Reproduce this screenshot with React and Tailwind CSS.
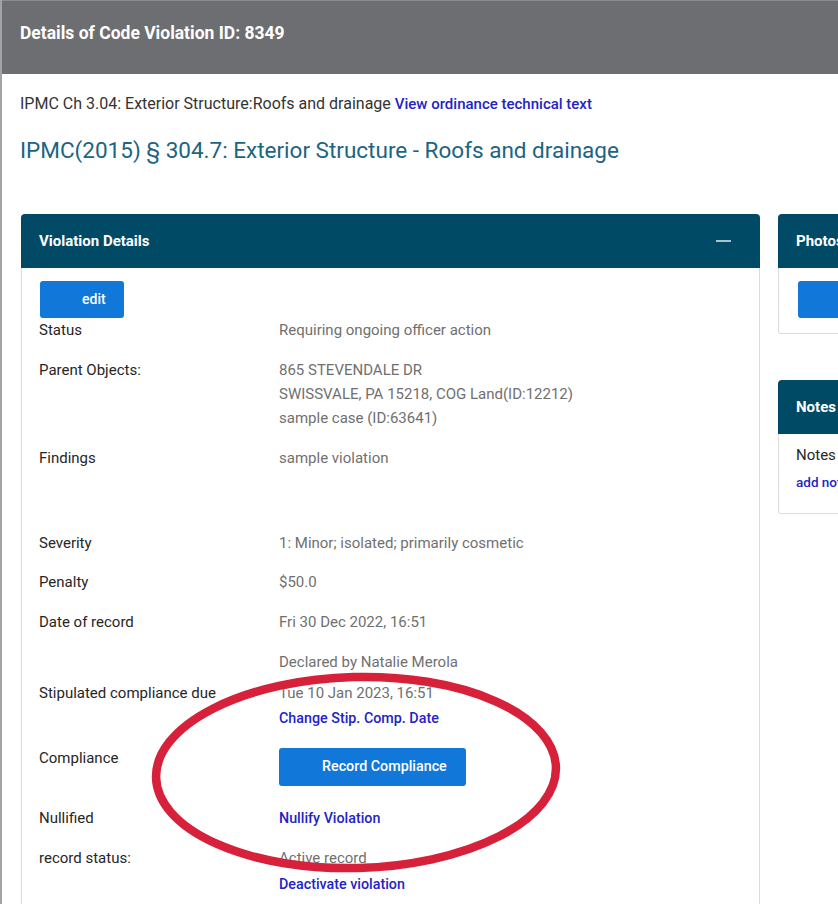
import React from 'react';

const label = 'text-[15px] leading-[20px] text-[#262626]';
const value = 'text-[15px] leading-[20px] text-[#707070]';
const link = 'text-[14.3px] leading-[20px] font-medium text-[#2323c8]';

function Row({ name, children, className = '' }) {
  return (
    <div className={`grid grid-cols-[240px_1fr] ${className}`}>
      <div className={label}>{name}</div>
      <div>{children}</div>
    </div>
  );
}

function SidePanel({ title, className = '', children }) {
  return (
    <div className={`w-[260px] shrink-0 ${className}`}>
      <div className="h-[54px] rounded-t-[4px] bg-[#004a66] px-[18px] flex items-center">
        <span className="text-[15px] font-bold text-white">{title}</span>
      </div>
      <div className="border border-t-0 border-[#dcdcdc] rounded-b-[3px] px-[18px]">{children}</div>
    </div>
  );
}

export default function App() {
  return (
    <div
      className="relative w-[838px] h-[904px] overflow-hidden bg-white border-l-2 border-[#a3a3a3]"
      style={{ fontFamily: 'Roboto, "Liberation Sans", sans-serif' }}
    >
      {/* page header */}
      <div className="h-[74px] bg-[#6d6e71] border-t border-[#8a8b8e] pl-[18px] pt-[20px]">
        <h1 className="text-[17.5px] leading-[24px] font-bold text-white">Details of Code Violation ID: 8349</h1>
      </div>

      <div className="pl-[18px]">
        <div className="pt-[20px] text-[16px] leading-[20px] text-[#333]">
          IPMC Ch 3.04: Exterior Structure:Roofs and drainage{' '}
          <span className="text-[15px] font-medium text-[#2323c8]">View ordinance technical text</span>
        </div>
        <h2 className="mt-[21px] text-[22.5px] leading-[30px] text-[#1b6482]">
          IPMC(2015) § 304.7: Exterior Structure - Roofs and drainage
        </h2>

        <div className="mt-[49px] flex gap-[18px] pl-[1px]">
          {/* main panel */}
          <div className="w-[739px] shrink-0">
            <div className="h-[54px] rounded-t-[4px] bg-[#004a66] pl-[18px] pr-[29px] flex items-center justify-between">
              <span className="text-[15px] font-bold text-white">Violation Details</span>
              <div className="w-[15px] h-[2px] bg-[#a9c4d1]" />
            </div>
            <div className="border border-t-0 border-[#dcdcdc] pl-[17px] pr-[18px] pt-[13px] h-[700px]">
              <button className="ml-[1px] h-[37px] w-[84px] rounded-[3px] bg-[#1177d8] pl-[42px] pr-[18px] text-left text-[14px] font-medium text-white">
                edit
              </button>
              <div className="flex flex-col mt-[2px]">
                <Row name="Status">
                  <div className={value}>Requiring ongoing officer action</div>
                </Row>
                <Row name="Parent Objects:" className="mt-[20px]">
                  <div className={value}>865 STEVENDALE DR</div>
                  <div className={`${value} mt-[4px]`}>SWISSVALE, PA 15218, COG Land(ID:12212)</div>
                  <div className={`${value} mt-[4px]`}>sample case (ID:63641)</div>
                </Row>
                <Row name="Findings" className="mt-[20px]">
                  <div className={`${value} pb-[45px]`}>sample violation</div>
                </Row>
                <Row name="Severity" className="mt-[20px]">
                  <div className={value}>1: Minor; isolated; primarily cosmetic</div>
                </Row>
                <Row name="Penalty" className="mt-[19px]">
                  <div className={value}>$50.0</div>
                </Row>
                <Row name="Date of record" className="mt-[20px]">
                  <div className={value}>Fri 30 Dec 2022, 16:51</div>
                </Row>
                <Row name="" className="mt-[20px]">
                  <div className={value}>Declared by Natalie Merola</div>
                </Row>
                <Row name="Stipulated compliance due" className="mt-[11px]">
                  <div className={value}>Tue 10 Jan 2023, 16:51</div>
                  <div className={`${link} mt-[5px] text-[13.5px]`}>Change Stip. Comp. Date</div>
                </Row>
                <Row name="Compliance" className="mt-[20px]">
                  <button className="h-[38px] w-[187px] rounded-[3px] bg-[#1177d8] pl-[43px] text-left text-[14.3px] font-medium text-white">
                    Record Compliance
                  </button>
                </Row>
                <Row name="Nullified" className="mt-[22px]">
                  <div className={link}>Nullify Violation</div>
                </Row>
                <Row name="record status:" className="mt-[20px]">
                  <div className={value}>Active record</div>
                  <div className={`${link} mt-[6px]`}>Deactivate violation</div>
                </Row>
              </div>
            </div>
          </div>

          {/* right column */}
          <div className="flex flex-col">
            <SidePanel title="Photos">
              <div className="pt-[13px] pb-[15px]">
                <div className="ml-[1px] h-[37px] w-[150px] rounded-[3px] bg-[#1177d8]" />
              </div>
            </SidePanel>
            <SidePanel title="Notes" className="mt-[46px]">
              <div className="pt-[11px] pb-[22px] -ml-[1px]">
                <div className="text-[15px] leading-[20px] text-[#262626]">Notes</div>
                <div className="mt-[8px] text-[13.5px] leading-[18px] font-medium text-[#2323c8]">add note</div>
              </div>
            </SidePanel>
          </div>
        </div>
      </div>

      {/* red annotation ellipse */}
      <svg className="absolute left-[146px] top-[669px]" width="416" height="208" viewBox="0 0 416 208">
        <ellipse cx="208" cy="103.5" rx="200" ry="95.5" fill="none" stroke="#d7203a" strokeWidth="8.5" transform="rotate(-1.5 208 103.5)" />
      </svg>
    </div>
  );
}
